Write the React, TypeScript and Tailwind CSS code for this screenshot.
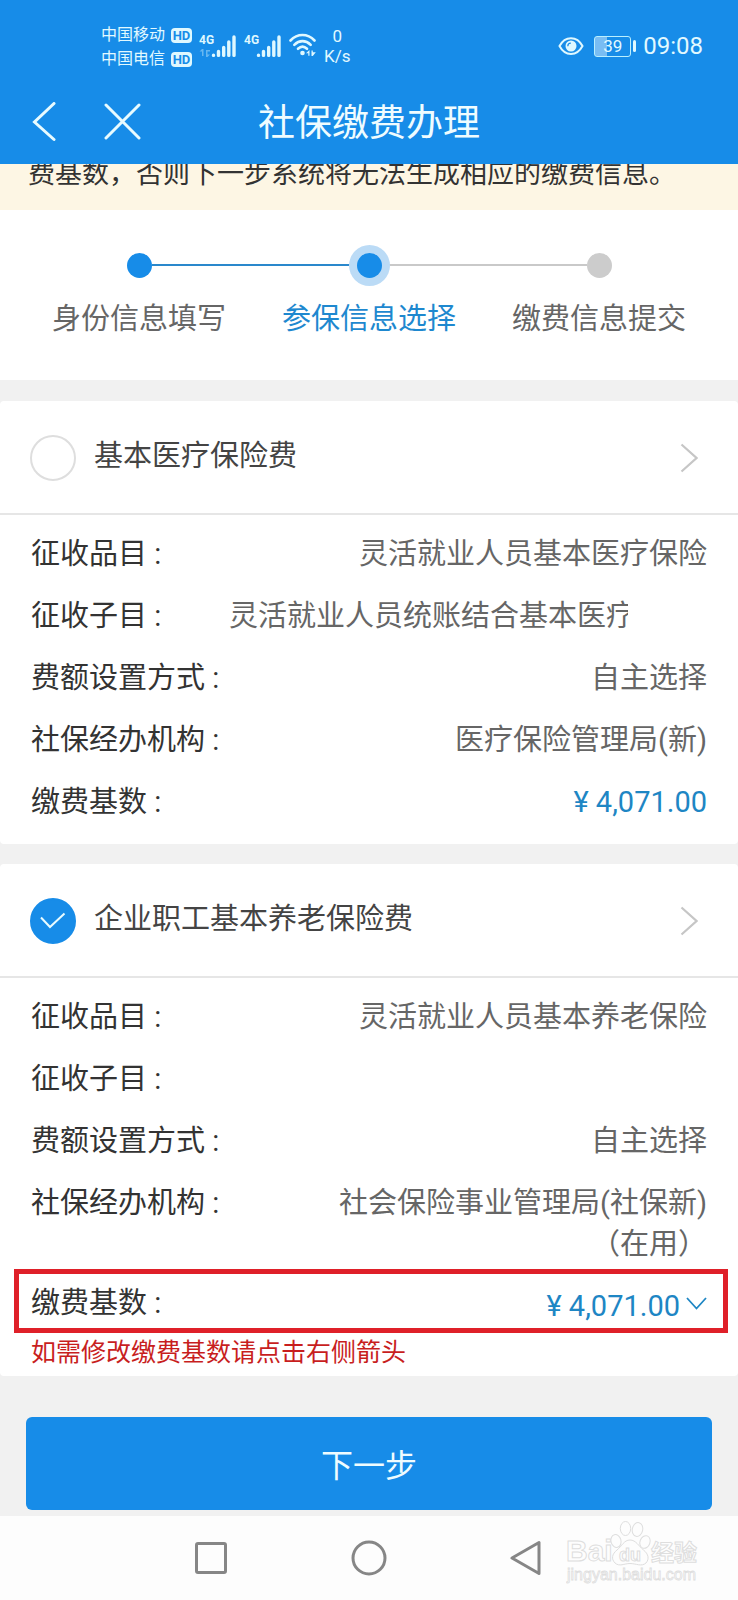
import React, { useState } from 'react';

type Row = { label: string; value: string; kind?: 'clipped' | 'amount' };

const steps = [
  { label: '身份信息填写', dot: 'bg-[#178ce8]', left: 'bg-transparent', right: 'bg-[#2a88cc]', text: 'text-[#666666]' },
  { label: '参保信息选择', dot: 'bg-[#178ce8] ring-8 ring-[#bbdbf6]', left: 'bg-[#2a88cc]', right: 'bg-[#c9c9c9]', text: 'text-[#1e88cf]' },
  { label: '缴费信息提交', dot: 'bg-[#cccccc]', left: 'bg-[#c9c9c9]', right: 'bg-transparent', text: 'text-[#666666]' },
];

const medicalRows: Row[] = [
  { label: '征收品目', value: '灵活就业人员基本医疗保险' },
  { label: '征收子目', value: '灵活就业人员统账结合基本医疗', kind: 'clipped' },
  { label: '费额设置方式', value: '自主选择' },
  { label: '社保经办机构', value: '医疗保险管理局(新)' },
  { label: '缴费基数', value: '¥ 4,071.00', kind: 'amount' },
];

const pensionRows: Row[] = [
  { label: '征收品目', value: '灵活就业人员基本养老保险' },
  { label: '征收子目', value: '' },
  { label: '费额设置方式', value: '自主选择' },
  { label: '社保经办机构', value: '社会保险事业管理局(社保新)（在用）' },
];

const valueStyles = {
  normal: 'max-w-[380px] text-right text-[#666666]',
  clipped: 'mr-[79px] w-[399px] overflow-hidden whitespace-nowrap text-[#666666]',
  amount: 'text-right text-[#1e86c4]',
};

const Signal: React.FC<{ data?: boolean }> = ({ data }) => (
  <svg width="38" height="26" viewBox="0 0 38 26" fill="#dff8ff" aria-hidden="true">
    <text x="0" y="11" fontSize="12" fontWeight="700" fontFamily="Roboto, sans-serif">4G</text>
    {data && <path d="M3 16v7h1.500v-7zM0.500 18.500L3 16v2.500zM7 17v7h1.500v-7zM8.500 21.500h2.500L8.500 24zM8.500 17h2.500v1.500H8.500z" opacity="0.4" />}
    <g stroke="#dff8ff" strokeWidth="3.400" strokeLinecap="round">
      <path d="M14.500 22.300v0.100M19.500 18.500v3.900M24.700 14.500v7.900M29.800 9v13.400M35 4v18.400" />
    </g>
  </svg>
);

const StatusBar: React.FC = () => (
  <div className="flex h-[92px] items-center justify-between pl-[101px] pr-[35px] text-[#e2f9ff]">
    <div className="flex items-center">
      <div className="pt-0.5 text-[16px] leading-6">
        {['中国移动', '中国电信'].map((name) => (
          <div key={name} className="flex items-center gap-1.5">
            <span>{name}</span>
            <span className="flex h-[15px] w-[21px] items-center justify-center rounded bg-[#dff8ff] text-[13px] font-bold leading-none text-[#178ce8]">HD</span>
          </div>
        ))}
      </div>
      <div className="ml-[7px] flex items-center gap-[7px]">
        <Signal data />
        <Signal />
        <svg width="28" height="26" viewBox="0 0 28 26" fill="none" stroke="#dff8ff" strokeWidth="2.600" strokeLinecap="round" aria-hidden="true">
          <path d="M1.500 7.500C8.500 0.200 18.500 0.200 25.500 7.500" />
          <path d="M5.300 11.800C10.200 6.900 16.800 6.900 21.700 11.800" />
          <path d="M9 15.800C11.800 13.200 15.200 13.200 18 15.800" />
          <circle cx="13.500" cy="20" r="2.300" fill="#dff8ff" stroke="none" />
          <path d="M17 20.300L20.500 17v5.800h-1.200v-2.500zM22.500 17.500h1.300v1.800h3L23.800 23h-1.300z" fill="#dff8ff" stroke="none" />
        </svg>
      </div>
      <div className="ml-[7px] text-center text-[17px] leading-5">
        <div>0</div>
        <div>K/s</div>
      </div>
    </div>
    <div className="flex items-center">
      <svg width="26" height="20" viewBox="0 0 26 20" fill="none" stroke="#dff8ff" aria-hidden="true">
        <path d="M1.500 10C7 -0.500 19 -0.500 24.500 10C19 20.500 7 20.500 1.500 10z" strokeWidth="2" />
        <circle cx="13" cy="10" r="5.500" fill="#dff8ff" stroke="none" />
        <path d="M9.800 10.200a3 3 0 0 1 3-3" stroke="#178ce8" strokeWidth="1.200" />
      </svg>
      <div className="ml-2.5 flex h-[21px] w-[37px] items-center justify-center rounded-[3px] border border-[#b9efff] bg-linear-to-r from-[#79bdf3] from-35% to-transparent to-35% text-[17px] leading-none">39</div>
      <div className="ml-0.5 h-3 w-[3px] rounded-sm bg-[#dff8ff]" />
      <div className="ml-[7px] text-[24px] leading-6">09:08</div>
    </div>
  </div>
);

const DetailRow: React.FC<{ row: Row }> = ({ row }) => (
  <div className="flex items-start justify-between">
    <dt className="shrink-0 text-[#333333]">{row.label} :</dt>
    <dd className={valueStyles[row.kind ?? 'normal']}>{row.value}</dd>
  </div>
);

const CardHeader: React.FC<{ id: string; title: string; checked: boolean; onChange: () => void }> = ({ id, title, checked, onChange }) => (
  <div className="flex h-[114px] items-center border-b-2 border-[#e6e6e6] pl-[30px] pr-10 pt-0.5">
    <span className="relative flex size-[46px] items-center justify-center">
      <input
        id={id}
        type="checkbox"
        checked={checked}
        onChange={onChange}
        className="size-[46px] appearance-none rounded-full border-2 border-[#dedede] bg-white checked:border-[#178ce8] checked:bg-[#178ce8]"
      />
      {checked && (
        <svg className="pointer-events-none absolute" width="26" height="18" viewBox="0 0 26 18" fill="none" stroke="#e8fbff" strokeWidth="2" aria-hidden="true">
          <path d="M1 5.500L10 15L24.500 1.500" />
        </svg>
      )}
    </span>
    <label htmlFor={id} className="ml-[18px] flex-1 pb-1 text-[29px] leading-[41px] text-[#444444]">{title}</label>
    <button type="button" aria-label={`${title}详情`}>
      <svg width="18" height="30" viewBox="0 0 18 30" fill="none" stroke="#c6c6c6" strokeWidth="2.200" aria-hidden="true">
        <path d="M1.500 1.500L16.500 15L1.500 28.500" />
      </svg>
    </button>
  </div>
);

const Watermark: React.FC = () => (
  <svg className="pointer-events-none absolute right-[38px] top-1" width="134" height="66" viewBox="0 0 134 66" fill="#fdfdfd" stroke="#dedede" strokeWidth="1" aria-hidden="true">
    <text x="0" y="41" fontSize="30" fontWeight="700" fontFamily="'Liberation Sans', Arial, sans-serif">Bai</text>
    <ellipse cx="50" cy="21" rx="5" ry="6.500" transform="rotate(-15 50 21)" />
    <ellipse cx="59.500" cy="8.500" rx="5.200" ry="7" />
    <ellipse cx="71.500" cy="9.500" rx="5.200" ry="7" transform="rotate(12 71.500 9.500)" />
    <ellipse cx="79" cy="22" rx="5" ry="6.500" transform="rotate(20 79 22)" />
    <path d="M64 20C58 20 56 26 51 30C46 34 45 39 49 43C53.500 47 58 43.500 64 43.500C70 43.500 75.500 47 80 43C83.500 39 82.500 34 77.500 30C72.500 26 70 20 64 20z" />
    <text x="53" y="41" fontSize="18" fontWeight="700" fontFamily="'Liberation Sans', Arial, sans-serif">du</text>
    <text x="85" y="41" fontSize="23" fontWeight="700" fontFamily="'Noto Sans CJK SC', sans-serif">经验</text>
    <text x="1" y="60" fontSize="16" strokeWidth="0.800" fontFamily="'Liberation Sans', Arial, sans-serif">jingyan.baidu.com</text>
  </svg>
);

export default function App() {
  const [medical, setMedical] = useState(false);
  const [pension, setPension] = useState(true);

  return (
    <div className="bg-[#f1f1f1] font-[Roboto,'Noto_Sans_CJK_SC',sans-serif]">
      <header className="bg-[#178ce8] pb-4">
        <StatusBar />
        <div className="grid h-14 grid-cols-[1fr_auto_1fr] items-center">
          <div className="flex items-center gap-12 pl-8">
            <button type="button" aria-label="返回">
              <svg width="24" height="40" viewBox="0 0 24 40" fill="none" stroke="#e8fbff" strokeWidth="3" strokeLinecap="round" aria-hidden="true">
                <path d="M22 1.500L2.500 20L22 37.500" />
              </svg>
            </button>
            <button type="button" aria-label="关闭">
              <svg width="38" height="38" viewBox="0 0 38 38" fill="none" stroke="#e8fbff" strokeWidth="3" strokeLinecap="round" aria-hidden="true">
                <path d="M2 2L35 35M35 2L2 35" />
              </svg>
            </button>
          </div>
          <h1 className="pt-1 text-[37px] leading-[56px] text-[#effcff]">社保缴费办理</h1>
        </div>
      </header>

      <div className="flex h-[46px] items-end overflow-hidden bg-[#fdf6e4] pb-[15px] pl-7 text-[27px] leading-[41px] text-[#333333]">
        <p className="whitespace-nowrap">费基数，否则下一步系统将无法生成相应的缴费信息。</p>
      </div>

      <ol className="grid grid-cols-3 bg-white px-6 pb-10 pt-[35px]">
        {steps.map((step) => (
          <li key={step.label}>
            <div className="flex h-10 items-center">
              <span className={`h-0.5 flex-1 ${step.left}`} />
              <span className={`z-10 size-[25px] rounded-full ${step.dot}`} />
              <span className={`h-0.5 flex-1 ${step.right}`} />
            </div>
            <p className={`mt-[14px] whitespace-nowrap text-center text-[29px] leading-[41px] ${step.text}`}>{step.label}</p>
          </li>
        ))}
      </ol>

      <main>
        <section className="mt-[21px] rounded bg-white">
          <CardHeader id="medical" title="基本医疗保险费" checked={medical} onChange={() => setMedical(!medical)} />
          <dl className="flex flex-col gap-[21px] px-[31px] pb-[21px] pt-[19px] text-[29px] leading-[41px]">
            {medicalRows.map((row) => <DetailRow key={row.label} row={row} />)}
          </dl>
        </section>

        <section className="mt-5 rounded bg-white pb-1.5">
          <CardHeader id="pension" title="企业职工基本养老保险费" checked={pension} onChange={() => setPension(!pension)} />
          <dl className="flex flex-col gap-[21px] px-[31px] pt-[19px] text-[29px] leading-[41px]">
            {pensionRows.map((row) => <DetailRow key={row.label} row={row} />)}
          </dl>
          <div className="ml-[14px] mr-2.5 mt-1 flex h-16 items-center justify-between border-[5px] border-[#df2029] pl-3 pr-4 text-[29px] leading-[41px]">
            <label htmlFor="base" className="pt-1 text-[#333333]">缴费基数 :</label>
            <div className="flex items-center gap-1.5 pt-2.5">
              <select id="base" className="appearance-none bg-transparent text-right text-[#1e86c4] [field-sizing:content]">
                <option>¥ 4,071.00</option>
              </select>
              <svg className="pointer-events-none" width="21" height="18" viewBox="0 0 21 18" fill="none" stroke="#1e86c4" strokeWidth="1.800" aria-hidden="true">
                <path d="M1 1L10.500 11.500L20 1" />
              </svg>
            </div>
          </div>
          <p className="mt-[3px] px-[31px] text-[25px] leading-[34px] text-[#c81e1e]">如需修改缴费基数请点击右侧箭头</p>
        </section>

        <div className="px-[26px] pb-1.5 pt-[41px]">
          <button type="button" className="h-[93px] w-full rounded-md bg-[#178ce8] pt-1 text-[32px] text-[#effcff]">下一步</button>
        </div>
      </main>

      <nav className="relative flex h-[84px] items-center justify-center gap-[123px] bg-[#fdfdfd]">
        <button type="button" aria-label="最近任务">
          <svg width="34" height="34" viewBox="0 0 34 34" fill="none" stroke="#868686" strokeWidth="3" aria-hidden="true">
            <rect x="2.500" y="2.500" width="29" height="29" rx="1.500" />
          </svg>
        </button>
        <button type="button" aria-label="主屏幕">
          <svg width="36" height="36" viewBox="0 0 36 36" fill="none" stroke="#868686" strokeWidth="3" aria-hidden="true">
            <circle cx="18" cy="18" r="16" />
          </svg>
        </button>
        <button type="button" aria-label="返回上一级">
          <svg width="34" height="36" viewBox="0 0 34 36" fill="none" stroke="#868686" strokeWidth="3" strokeLinejoin="round" aria-hidden="true">
            <path d="M29 2.500V33.500L2 18z" />
          </svg>
        </button>
        <Watermark />
      </nav>
    </div>
  );
}
